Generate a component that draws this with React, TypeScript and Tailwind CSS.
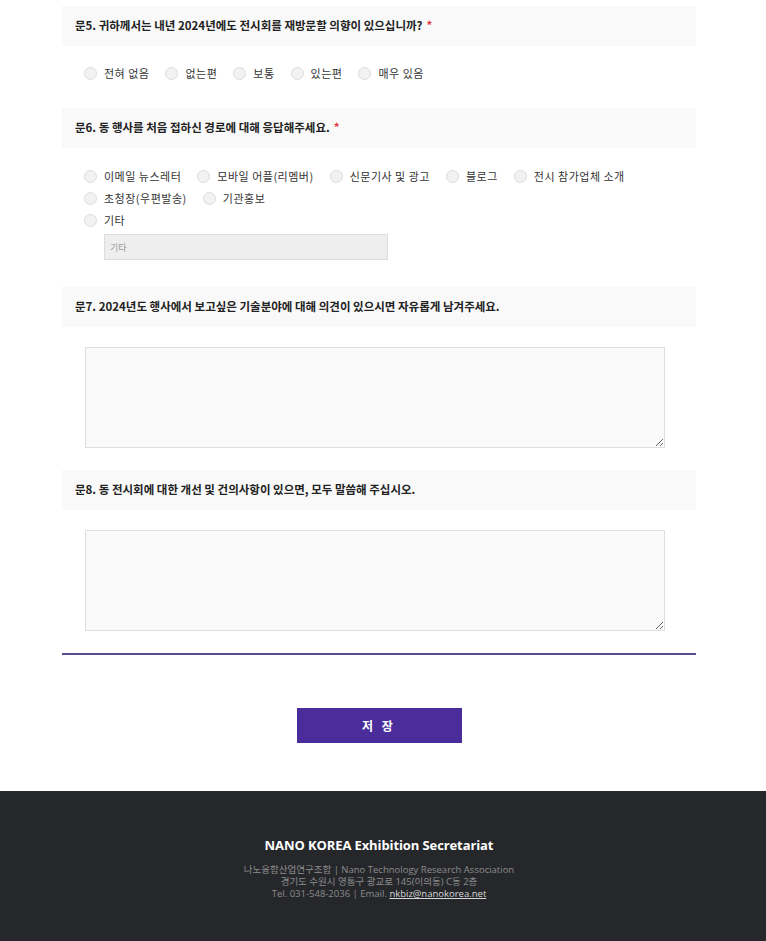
import React from 'react';

const KR = { fontFamily: '"Noto Sans CJK KR", "Noto Sans", sans-serif' };

function Radio({ label }: { label: string }) {
  return (
    <label className="flex items-center gap-[7px] mr-[16px] h-[22px] text-[11px] tracking-[0.5px] text-[#333]">
      <span className="inline-block w-[13px] h-[13px] rounded-full border border-[#dcdcdc] bg-[#f2f2f2]" />
      <span>{label}</span>
    </label>
  );
}

function QuestionHeader({ children, required }: { children: React.ReactNode; required?: boolean }) {
  return (
    <div className="h-[40px] bg-[#f9f9f9] flex items-center px-[13px] text-[11.5px] font-bold text-[#222]">
      <span>
        {children}
        {required && <span className="text-[#e03c3c] ml-[4px]">*</span>}
      </span>
    </div>
  );
}

function Memo() {
  return (
    <textarea className="block ml-[23px] w-[580px] h-[101px] bg-[#fafafa] border border-[#dedede] resize-y outline-none" />
  );
}

export default function App() {
  return (
    <div className="min-h-[941px] bg-white flex flex-col" style={KR}>
      <div className="ml-[62px] w-[634px] pt-[6px]">
        {/* 문5 */}
        <QuestionHeader required>문5. 귀하께서는 내년 2024년에도 전시회를 재방문할 의향이 있으십니까?</QuestionHeader>
        <div className="flex pl-[22px] pt-[16px]">
          {['전혀 없음', '없는편', '보통', '있는편', '매우 있음'].map((o) => (
            <Radio key={o} label={o} />
          ))}
        </div>

        {/* 문6 */}
        <div className="mt-[24px]">
          <QuestionHeader required>문6. 동 행사를 처음 접하신 경로에 대해 응답해주세요.</QuestionHeader>
        </div>
        <div className="pl-[22px] pt-[17px]">
          <div className="flex">
            {['이메일 뉴스레터', '모바일 어플(리멤버)', '신문기사 및 광고', '블로그', '전시 참가업체 소개'].map((o) => (
              <Radio key={o} label={o} />
            ))}
          </div>
          <div className="flex">
            {['초청장(우편발송)', '기관홍보'].map((o) => (
              <Radio key={o} label={o} />
            ))}
          </div>
          <div className="flex">
            <Radio label="기타" />
          </div>
          <input
            placeholder="기타"
            className="block mt-[3px] ml-[20px] w-[284px] h-[26px] bg-[#eeeeee] border border-[#dcdcdc] px-[5px] text-[9px] placeholder:text-[#999] outline-none"
          />
        </div>

        {/* 문7 */}
        <div className="mt-[27px]">
          <QuestionHeader>문7. 2024년도 행사에서 보고싶은 기술분야에 대해 의견이 있으시면 자유롭게 남겨주세요.</QuestionHeader>
        </div>
        <div className="pt-[20px]">
          <Memo />
        </div>

        {/* 문8 */}
        <div className="mt-[22px]">
          <QuestionHeader>문8. 동 전시회에 대한 개선 및 건의사항이 있으면, 모두 말씀해 주십시오.</QuestionHeader>
        </div>
        <div className="pt-[20px]">
          <Memo />
        </div>

        <div className="mt-[22px] h-[2px] bg-[#5b4a8e]" />

        <div className="flex justify-center pt-[53px] pb-[48px]">
          <button className="w-[165px] h-[35px] bg-[#4a2d9b] text-white text-[12px] font-bold tracking-[3px]">
            저 장
          </button>
        </div>
      </div>

      <footer className="flex-1 bg-[#26272b] pt-[45px] pb-[40px]">
        <div className="ml-[62px] w-[634px] flex flex-col items-center text-center">
          <div className="text-white text-[13px] font-bold tracking-[-0.1px]" style={{ fontFamily: '"Open Sans", "Noto Sans CJK KR", sans-serif' }}>
            NANO KOREA Exhibition Secretariat
          </div>
          <div className="mt-[8px] text-[9.5px] leading-[12px] text-[#8c8c8c]" style={{ fontFamily: '"Open Sans", "Noto Sans CJK KR", sans-serif' }}>
            <div>나노융합산업연구조합 | Nano Technology Research Association</div>
            <div>경기도 수원시 영통구 광교로 145(이의동) C동 2층</div>
            <div>
              Tel. 031-548-2036 | Email. <span className="text-[#d8d8d8] underline">nkbiz@nanokorea.net</span>
            </div>
          </div>
        </div>
      </footer>
    </div>
  );
}
